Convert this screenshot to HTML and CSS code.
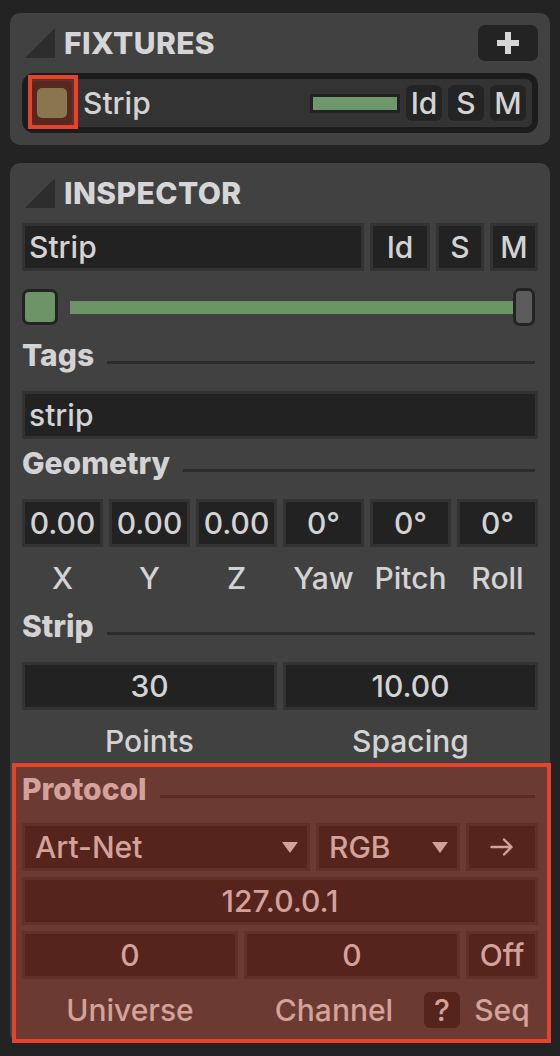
FILE: index.html
```html
<!DOCTYPE html>
<html lang="en">
<head>
<meta charset="utf-8">
<title>Fixtures</title>
<link rel="stylesheet" href="styles.css">
</head>
<body>
<main class="app">
  <section class="panel fixtures">
    <header class="title-row">
      <svg class="tri" viewBox="0 0 36 36"><polygon points="3,33 33,3 33,33"/></svg>
      <h2 class="title">FIXTURES</h2>
      <button class="add-btn" type="button"><svg viewBox="0 0 22 22"><path d="M11 0V22M0 11H22"/></svg></button>
    </header>
    <div class="fixture-row">
      <div class="swatch-btn highlight"><span class="swatch"></span></div>
      <span class="fx-name">Strip</span>
      <span class="meter"><span class="meter-fill"></span></span>
      <span class="tog">Id</span>
      <span class="tog">S</span>
      <span class="tog">M</span>
    </div>
  </section>

  <section class="panel inspector">
    <header class="title-row">
      <svg class="tri" viewBox="0 0 36 36"><polygon points="3,33 33,3 33,33"/></svg>
      <h2 class="title">INSPECTOR</h2>
    </header>

    <div class="name-row">
      <div class="field text-left">Strip</div>
      <div class="field">Id</div>
      <div class="field">S</div>
      <div class="field">M</div>
    </div>

    <div class="slider-row">
      <span class="knob"></span>
      <span class="track"></span>
      <span class="thumb"></span>
    </div>

    <div class="heading"><span>Tags</span><span class="rule"></span></div>
    <div class="field text-left">strip</div>

    <div class="heading"><span>Geometry</span><span class="rule"></span></div>
    <div class="grid6">
      <div class="field">0.00</div>
      <div class="field">0.00</div>
      <div class="field">0.00</div>
      <div class="field">0°</div>
      <div class="field">0°</div>
      <div class="field">0°</div>
    </div>
    <div class="grid6 labels">
      <span>X</span><span>Y</span><span>Z</span><span>Yaw</span><span>Pitch</span><span>Roll</span>
    </div>

    <div class="heading"><span>Strip</span><span class="rule"></span></div>
    <div class="grid2">
      <div class="field">30</div>
      <div class="field">10.00</div>
    </div>
    <div class="grid2 labels">
      <span>Points</span><span>Spacing</span>
    </div>

    <div class="protocol highlight">
      <div class="heading proto-heading"><span>Protocol</span><span class="rule"></span></div>
      <div class="proto-row1">
        <div class="field dropdown"><span>Art-Net</span><svg class="caret" viewBox="0 0 16 11"><polygon points="0,0 16,0 8,11"/></svg></div>
        <div class="field dropdown"><span>RGB</span><svg class="caret" viewBox="0 0 16 11"><polygon points="0,0 16,0 8,11"/></svg></div>
        <div class="field"><svg class="arrow" viewBox="0 0 24 18"><path d="M1.5 9H21.5M14 1.5L21.5 9L14 16.5"/></svg></div>
      </div>
      <div class="field proto-ip">127.0.0.1</div>
      <div class="proto-row3">
        <div class="field">0</div>
        <div class="field">0</div>
        <div class="field">Off</div>
      </div>
      <div class="proto-labels">
        <span>Universe</span>
        <span class="chan"><span class="chan-label">Channel</span><span class="help">?</span></span>
        <span>Seq</span>
      </div>
    </div>
  </section>
</main>
</body>
</html>
```

FILE: styles.css
```css
* { box-sizing: border-box; }

body {
  margin: 0;
  background: #232323;
  color: #d3d3d3;
  font-family: "Inter", "Noto Sans", "Liberation Sans", sans-serif;
  font-size: 30px;
  font-weight: 500;
  line-height: 48px;
}

.app {
  width: 560px;
  padding: 13px 10px;
  display: flex;
  flex-direction: column;
  gap: 18px;
}

.panel {
  width: 540px;
  background: #414141;
  border-radius: 10px;
  padding: 12px;
}

.inspector { padding-bottom: 9px; }

/* title rows */
.title-row {
  height: 36px;
  display: flex;
  align-items: center;
  gap: 6px;
}
.tri { width: 36px; height: 36px; flex: none; }
.tri polygon { fill: #2d2d2d; }
.title {
  margin: 0;
  font-size: 30px;
  font-weight: 800;
  letter-spacing: 0.4px;
  line-height: 36px;
  color: #d6d6d6;
  flex: 1;
}
.add-btn {
  width: 60px;
  height: 36px;
  border: 0;
  border-radius: 7px;
  background: #232323;
  display: flex;
  align-items: center;
  justify-content: center;
  padding: 0;
}
.add-btn svg { width: 22px; height: 22px; }
.add-btn path { stroke: #d6d6d6; stroke-width: 6; fill: none; }

/* fixture list row */
.fixture-row {
  margin-top: 12px;
  height: 60px;
  border: 6px solid #1c1c1c;
  border-radius: 12px;
  background: #333333;
  display: flex;
  align-items: center;
  padding: 0 6px 0 4px;
}
.swatch-btn {
  width: 40px;
  height: 44px;
  background: #262626;
  border-radius: 4px;
  display: flex;
  align-items: center;
  justify-content: center;
  flex: none;
}
.swatch {
  width: 30px;
  height: 30px;
  border-radius: 5px;
  background: #6d9669;
}
.fx-name { margin-left: 11px; flex: 1; line-height: 48px; }
.meter {
  width: 90px;
  height: 19px;
  background: #222222;
  padding: 3px;
  margin-right: 6px;
  display: flex;
}
.meter-fill { flex: 1; background: #6e976b; }
.tog {
  width: 36px;
  height: 36px;
  border-radius: 6px;
  background: #242424;
  line-height: 36px;
  text-align: center;
  margin-left: 6px;
}
.meter + .tog { margin-left: 0; }

/* highlight overlays */
.highlight { position: relative; }
.highlight::after {
  content: "";
  position: absolute;
  background: rgba(210, 41, 13, 0.29);
  border: 4px solid #e5432b;
  pointer-events: none;
}
.swatch-btn.highlight::after { top: -6px; bottom: -4px; left: -4px; right: -6px; }
.protocol.highlight::after { top: -2px; bottom: -9px; left: -10px; right: -13px; }

/* fields */
.field {
  height: 48px;
  border: 3px solid #333333;
  background: #222222;
  line-height: 42px;
  text-align: center;
  white-space: nowrap;
  display: flex;
  align-items: center;
  justify-content: center;
}
.field.text-left { justify-content: flex-start; padding-left: 4px; }

.name-row {
  margin-top: 12px;
  display: grid;
  grid-template-columns: 1fr 60px 48px 48px;
  gap: 6px;
}

/* slider */
.slider-row {
  margin-top: 12px;
  height: 48px;
  display: flex;
  align-items: center;
  padding-right: 3px;
}
.knob {
  width: 36px;
  height: 36px;
  border: 3px solid #232323;
  border-radius: 7px;
  background: #6c9467;
  flex: none;
}
.track {
  flex: 1;
  height: 13px;
  margin-left: 12px;
  background: #6c9467;
}
.thumb {
  width: 22px;
  height: 38px;
  border: 3px solid #232323;
  border-radius: 7px;
  background: #5c5c5c;
  flex: none;
}

/* section headings */
.heading {
  height: 48px;
  display: flex;
  align-items: center;
  gap: 13px;
  font-weight: 800;
  margin-bottom: 12px;
  padding-right: 3px;
}
.rule {
  flex: 1;
  height: 3px;
  margin-top: 14px;
  background: #2b2b2b;
}

.grid6 {
  display: grid;
  grid-template-columns: repeat(6, 1fr);
  gap: 6px;
}
.grid2 {
  display: grid;
  grid-template-columns: 1fr 1fr;
  gap: 6px;
}
.labels {
  margin-top: 7px;
  height: 48px;
  text-align: center;
}

/* protocol */
.proto-heading { margin-bottom: 10px; }
.proto-row1 {
  display: grid;
  grid-template-columns: 2fr 1fr 72px;
  gap: 6px;
}
.dropdown {
  justify-content: space-between;
  padding: 0 9px 0 10px;
}
.caret { width: 16px; height: 11px; }
.caret polygon { fill: #d3d3d3; }
.arrow { width: 24px; height: 18px; }
.arrow path { stroke: #d3d3d3; stroke-width: 2.4; fill: none; stroke-linecap: round; stroke-linejoin: round; }
.proto-ip { margin-top: 6px; }
.proto-row3 {
  margin-top: 6px;
  display: grid;
  grid-template-columns: 1fr 1fr 72px;
  gap: 6px;
}
.proto-labels {
  margin-top: 7px;
  height: 48px;
  display: grid;
  grid-template-columns: 1fr 1fr 72px;
  gap: 6px;
  text-align: center;
  align-items: center;
}
.chan { display: flex; align-items: center; }
.chan-label { flex: 1; }
.help {
  width: 36px;
  height: 36px;
  border-radius: 6px;
  background: #222222;
  line-height: 36px;
  text-align: center;
  flex: none;
}
```
